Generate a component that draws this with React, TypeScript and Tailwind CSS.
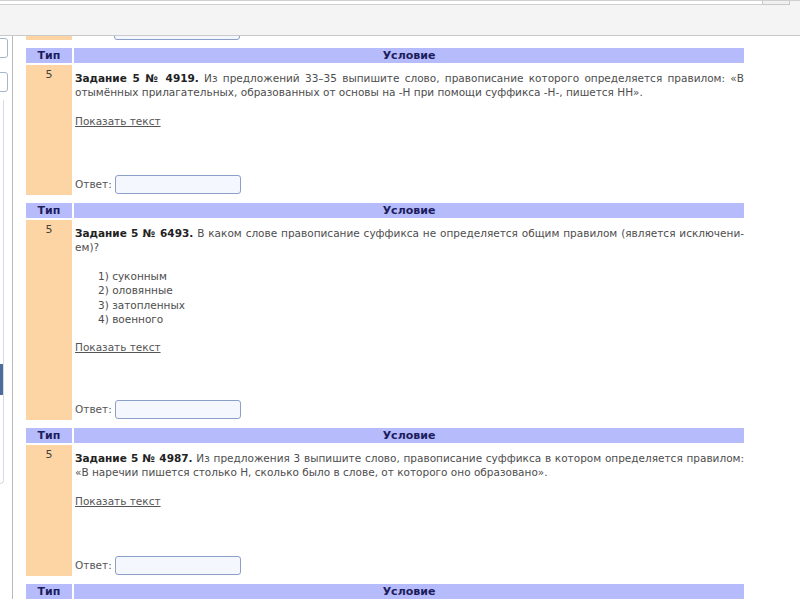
type Task = {
  num: string;
  head: string;
  tail: string;
  options?: string[];
  height: number;
};

const tasks: Task[] = [
  {
    num: "4919",
    head: "Из предложений 33–35 выпишите слово, правописание которого определяется правилом: «В",
    tail: "отымённых прилагательных, образованных от основы на -Н при помощи суффикса -Н-, пишется НН».",
    height: 130,
  },
  {
    num: "6493",
    head: "В каком слове правописание суффикса не определяется общим правилом (является исключени-",
    tail: "ем)?",
    options: ["суконным", "оловянные", "затопленных", "военного"],
    height: 200,
  },
  {
    num: "4987",
    head: "Из предложения 3 выпишите слово, правописание суффикса в котором определяется правилом:",
    tail: "«В наречии пишется столько Н, сколько было в слове, от которого оно образовано».",
    height: 131,
  },
];

function HeaderRow() {
  return (
    <div className="flex h-[15px] gap-[2px] text-[11px] font-bold leading-[15px] text-[#1d1d5e]">
      <div className="w-[46px] bg-[#b5bbfb] text-center">Тип</div>
      <div className="flex-1 bg-[#b5bbfb] text-center">Условие</div>
    </div>
  );
}

function AnswerField() {
  return (
    <div className="flex items-center gap-[3px] text-[#555]">
      <span>Ответ:</span>
      <div className="h-[19px] w-[126px] rounded-[3px] border border-[#8c9fc9] bg-[#f4f7fe]" />
    </div>
  );
}

function TaskBlock({ task }: { task: Task }) {
  return (
    <div className="flex flex-col gap-[2px]">
      <HeaderRow />
      <div className="flex gap-[2px]" style={{ height: task.height }}>
        <div className="w-[46px] bg-[#fdd4a3] pt-[3px] text-center text-[11px] text-[#444]">5</div>
        <div className="flex flex-1 flex-col pl-[1px] pt-[6px] pb-[1px]">
          <div className="text-justify [text-align-last:justify]">
            <b className="text-[#222]">Задание 5 № {task.num}.</b> {task.head}
          </div>
          <div>{task.tail}</div>
          {task.options && (
            <ol className="mt-[14px] pl-[23px]">
              {task.options.map((o, i) => (
                <li key={o}>
                  {i + 1}) {o}
                </li>
              ))}
            </ol>
          )}
          <a className="mt-[14px] self-start text-[#555] underline">Показать текст</a>
          <div className="mt-auto">
            <AnswerField />
          </div>
        </div>
      </div>
    </div>
  );
}

export default function App() {
  return (
    <div className="h-[600px] w-[800px] overflow-hidden bg-white font-['DejaVu_Sans',sans-serif] text-[10.5px] leading-[14.4px] text-[#4d4d4d]">
      {/* browser toolbar strip */}
      <div className="h-[36px] border-t border-b border-t-[#cfcfcf] border-b-[#c9c9c9] bg-[#f4f4f4]">
        <div className="flex h-[4px]">
          <div className="w-[762px] border-b border-[#d0d0d0] bg-white" />
          <div className="w-[28px] border-x border-b border-[#c8c8c8] bg-[#f0f0f0]" />
        </div>
      </div>

      <div className="flex h-[563px]">
        {/* left frame edge */}
        <div className="flex w-[13px] flex-col border-r border-[#b9b9b9]">
          <div className="-ml-[2px] mt-[2px] h-[20px] w-[10px] rounded-r-[3px] border border-[#a7b5ca] bg-white" />
          <div className="-ml-[2px] mt-[14px] h-[20px] w-[10px] rounded-r-[3px] border border-[#a7b5ca] bg-white" />
          <div className="mt-[8px] flex h-[384px] w-[4px] flex-col rounded-br-[4px] border-r border-b border-[#d6dce6]">
            <div className="mt-[264px] h-[31px] w-[3px] bg-[#4c6d9b]" />
          </div>
        </div>

        <div className="w-[731px] pl-[13px]">
          {/* tail of the previous task */}
          <div className="flex h-[12px] gap-[2px] overflow-hidden">
            <div className="h-[4px] w-[46px] bg-[#fdd4a3]" />
            <div className="pl-[40px]">
              <div className="-mt-[15px] h-[19px] w-[126px] rounded-[3px] border border-[#8c9fc9] bg-[#f4f7fe]" />
            </div>
          </div>
          <div className="flex flex-col gap-[8px]">
            {tasks.map((t) => (
              <TaskBlock key={t.num} task={t} />
            ))}
            <HeaderRow />
          </div>
        </div>
      </div>
    </div>
  );
}
